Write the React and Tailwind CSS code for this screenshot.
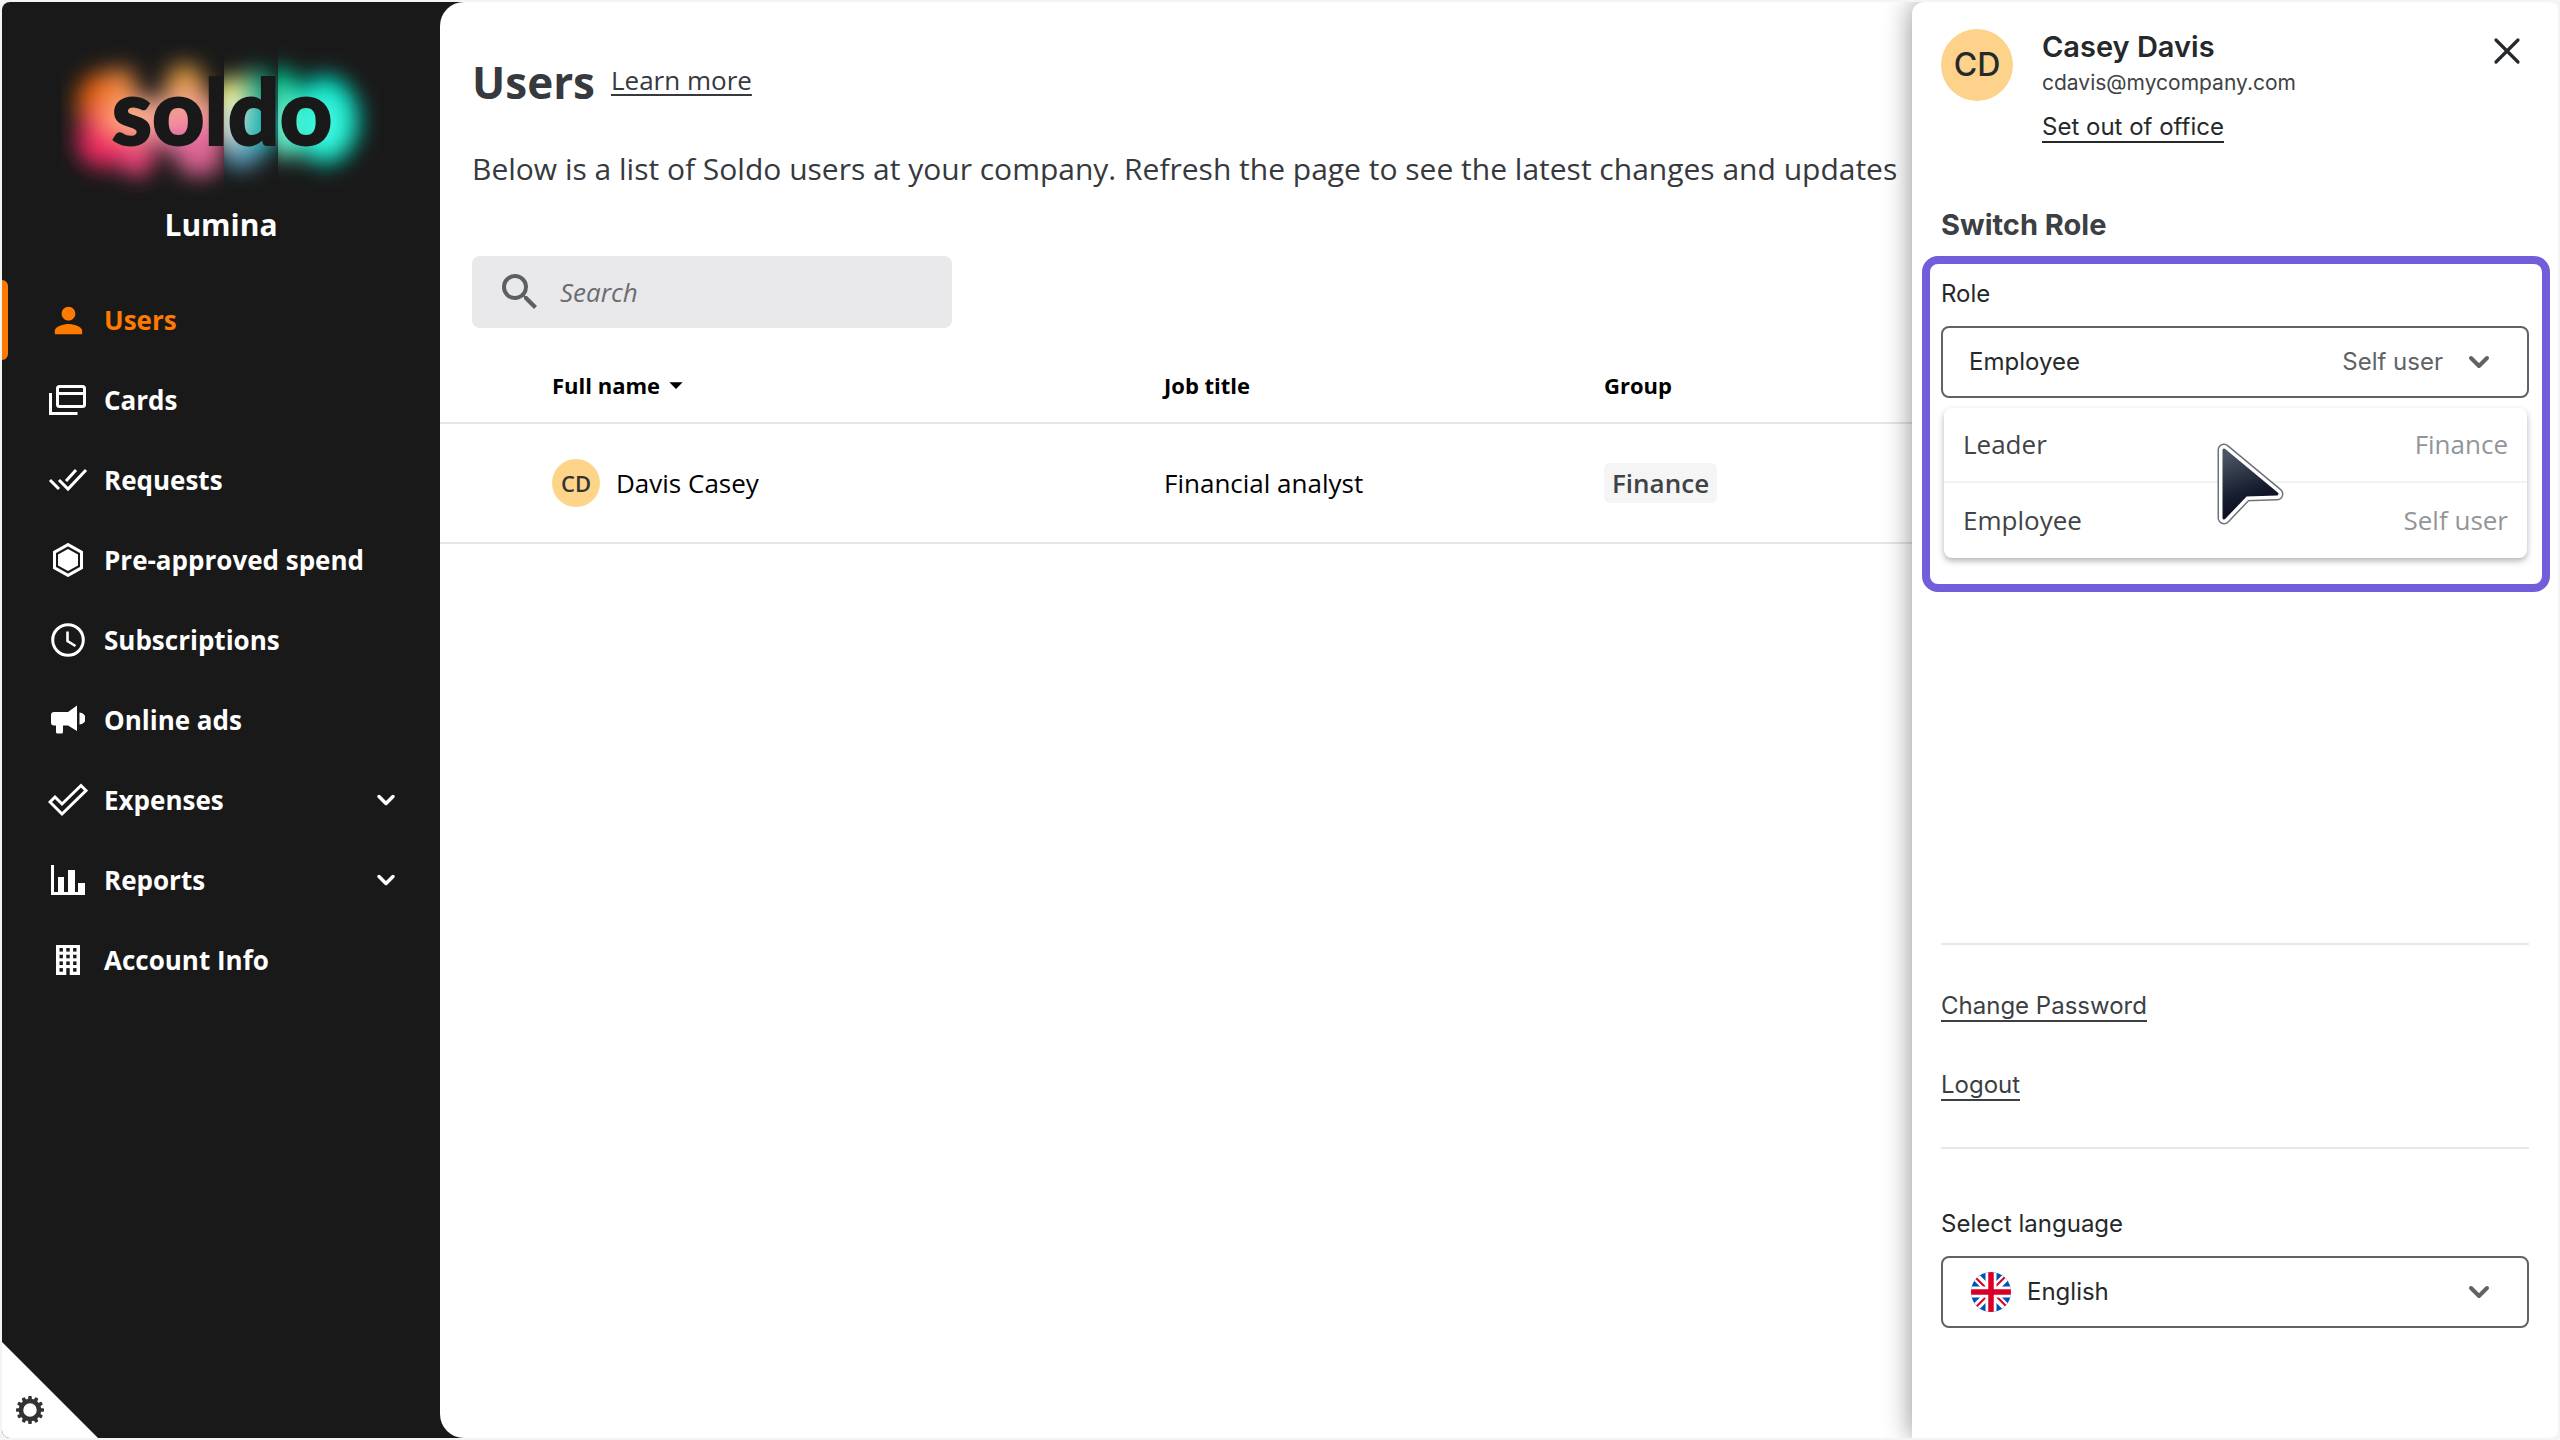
import { ChevronDown, X } from 'lucide-react'
import {
  MdPerson,
  MdSearch,
  MdArrowDropDown,
} from 'react-icons/md'

const SANS = "font-['Open_Sans','Noto_Sans',sans-serif]"
const INTER = 'font-[Inter,Roboto,sans-serif]'

const stroke = { fill: 'none', stroke: 'currentColor' }

function CardsIcon() {
  return (
    <svg viewBox="0 0 38 32" className="h-8 w-[38px]" {...stroke} strokeWidth="3">
      <rect x="8.5" y="2.5" width="27" height="20" rx="2" />
      <path d="M8 9.5h28M1.500 9v20.500h27" />
    </svg>
  )
}

function RequestsIcon() {
  return (
    <svg viewBox="0 0 40 24" className="h-6 w-10" {...stroke} strokeWidth="3">
      <path d="M2 12l9 9M11 12l9 9L38 2M18 13L28 2" />
    </svg>
  )
}

function SpendIcon() {
  return (
    <svg viewBox="0 0 30 34" className="h-[34px] w-[30px]">
      <path d="M15 1.600L28.500 9.200v15.600L15 32.400 1.500 24.800V9.200z" {...stroke} strokeWidth="3" />
      <path d="M15 6l10 5.500v11L15 28 5 22.500v-11z" fill="currentColor" />
    </svg>
  )
}

function ClockIcon() {
  return (
    <svg viewBox="0 0 34 34" className="h-[34px] w-[34px]" {...stroke} strokeWidth="3">
      <circle cx="17" cy="17" r="15.300" />
      <path d="M16.500 8.500v9.500l8 5" strokeWidth="2.600" />
    </svg>
  )
}

function MegaphoneIcon() {
  return (
    <svg viewBox="0 0 34 30" className="h-[30px] w-[34px]" fill="currentColor">
      <path d="M3 7h14l9-6.500v25.500L17 20.500h-5V27a1.500 1.500 0 0 1-1.500 1.500h-4A1.500 1.500 0 0 1 5 27v-6.500H3a3 3 0 0 1-3-3V10a3 3 0 0 1 3-3z" />
      <path d="M28.500 7.500a6 6 0 0 1 0 12z" />
    </svg>
  )
}

function ExpensesIcon() {
  return (
    <svg viewBox="0 0 40 34" className="h-[34px] w-10" {...stroke} strokeWidth="3">
      <path d="M2 19l5-5 7 7L33 2.500l5 5L14 31z" />
    </svg>
  )
}

function ReportsIcon() {
  return (
    <svg viewBox="0 0 34 30" className="h-[30px] w-[34px]" fill="currentColor">
      <path d="M0 0h3v27h4V12h6v15h4V5h7v22h3v-9h7v12H0z" />
    </svg>
  )
}

function BuildingIcon() {
  const cells = [0, 1, 2, 3].flatMap(r => [0, 1, 2].map(c => [c, r]))
  return (
    <svg viewBox="0 0 24 30" className="h-[30px] w-6">
      <rect width="24" height="30" fill="currentColor" />
      {cells.map(([c, r]) => (
        <rect key={`${c}-${r}`} x={3.500 + c * 6.800} y={3 + r * 6.700} width="3.400" height={r === 3 && c === 1 ? 7 : 3.600} fill="#191919" />
      ))}
    </svg>
  )
}

function UserIcon() {
  return <MdPerson className="h-[41px] w-[41px]" />
}

const NAV = [
  { label: 'Users', icon: UserIcon, active: true },
  { label: 'Cards', icon: CardsIcon },
  { label: 'Requests', icon: RequestsIcon },
  { label: 'Pre-approved spend', icon: SpendIcon },
  { label: 'Subscriptions', icon: ClockIcon },
  { label: 'Online ads', icon: MegaphoneIcon },
  { label: 'Expenses', icon: ExpensesIcon, expandable: true },
  { label: 'Reports', icon: ReportsIcon, expandable: true },
  { label: 'Account Info', icon: BuildingIcon },
]

const ROLES = [
  { name: 'Leader', scope: 'Finance' },
  { name: 'Employee', scope: 'Self user' },
]

// Blurred colour blobs cut off sharply at the right edge of the "l" and the "d"
function Logo() {
  return (
    <svg viewBox="0 0 320 160" className="h-[160px] w-[320px]" role="img" aria-label="soldo">
      <defs>
        <filter id="glow" x="-50%" y="-50%" width="200%" height="200%">
          <feGaussianBlur stdDeviation="11" />
        </filter>
        <clipPath id="left"><rect x="0" y="0" width="163" height="160" /></clipPath>
        <clipPath id="mid"><rect x="163" y="0" width="54" height="160" /></clipPath>
        <clipPath id="right"><rect x="217" y="0" width="103" height="160" /></clipPath>
      </defs>
      <g clipPath="url(#left)">
        <g filter="url(#glow)">
          <ellipse cx="42" cy="60" rx="26" ry="32" fill="#e8600f" />
          <ellipse cx="60" cy="46" rx="16" ry="22" fill="#f08a3c" />
          <ellipse cx="42" cy="96" rx="26" ry="28" fill="#ee2a62" />
          <ellipse cx="76" cy="112" rx="18" ry="20" fill="#f0467c" />
          <ellipse cx="58" cy="74" rx="18" ry="18" fill="#ff9a70" />
          <ellipse cx="84" cy="74" rx="24" ry="20" fill="#ffb090" />
          <ellipse cx="124" cy="44" rx="20" ry="24" fill="#e09a3c" />
          <ellipse cx="126" cy="70" rx="36" ry="22" fill="#f8a88c" />
          <ellipse cx="128" cy="90" rx="38" ry="18" fill="#f07ca8" />
          <ellipse cx="138" cy="112" rx="24" ry="20" fill="#dc6492" />
        </g>
      </g>
      <g clipPath="url(#mid)">
        <g filter="url(#glow)">
          <ellipse cx="170" cy="54" rx="20" ry="20" fill="#fcfc84" />
          <ellipse cx="196" cy="46" rx="18" ry="20" fill="#12b488" />
          <ellipse cx="172" cy="82" rx="20" ry="24" fill="#e6ecdf" />
          <ellipse cx="198" cy="82" rx="22" ry="26" fill="#1fc0bc" />
          <ellipse cx="180" cy="110" rx="20" ry="14" fill="#5a9fc0" />
        </g>
      </g>
      <g clipPath="url(#right)">
        <g filter="url(#glow)">
          <ellipse cx="220" cy="50" rx="18" ry="26" fill="#00cc98" />
          <ellipse cx="224" cy="84" rx="20" ry="30" fill="#6cf4cc" />
          <ellipse cx="264" cy="76" rx="34" ry="44" fill="#00e4c8" />
          <ellipse cx="262" cy="80" rx="20" ry="26" fill="#40f8e0" />
        </g>
      </g>
      <text x="161" y="101" textAnchor="middle" className="font-[Lato,sans-serif] text-[91px] font-black" fill="#191919" stroke="#191919" strokeWidth="2">soldo</text>
    </svg>
  )
}

function Gear() {
  return (
    <svg viewBox="-14 -14 28 28" className="h-7 w-7" fill="#333">
      <circle r="9" fill="none" stroke="#333" strokeWidth="4.500" />
      {Array.from({ length: 12 }, (_, i) => (
        <rect key={i} x="-1.800" y="-14" width="3.600" height="5" rx="1" transform={`rotate(${i * 30})`} />
      ))}
    </svg>
  )
}

function Flag() {
  return (
    <svg viewBox="0 0 40 40" className="h-10 w-10" aria-hidden="true">
      <clipPath id="round"><circle cx="20" cy="20" r="20" /></clipPath>
      <g clipPath="url(#round)">
        <rect width="40" height="40" fill="#0052b4" />
        <path d="M3 3l34 34M37 3L3 37" stroke="#fff" strokeWidth="8" />
        <path d="M4 5l15 15M36 35L21 20M35 4L20 19M4 36l16-16" stroke="#d80027" strokeWidth="2" />
        <path d="M20 0v40M0 20h40" stroke="#fff" strokeWidth="11" />
        <path d="M20 0v40M0 20h40" stroke="#d80027" strokeWidth="5.500" />
      </g>
    </svg>
  )
}

function Cursor() {
  return (
    <svg viewBox="0 0 68 84" className="h-[84px] w-[68px]" aria-hidden="true">
      <defs>
        <linearGradient id="arrow" x1="0.300" y1="0" x2="0.600" y2="1">
          <stop offset="0" stopColor="#4a5462" />
          <stop offset="0.600" stopColor="#161d2e" />
          <stop offset="1" stopColor="#060a1c" />
        </linearGradient>
      </defs>
      <path d="M7 7v68l22-23 31-1z" fill="#6f727b" stroke="#6f727b" strokeWidth="13" strokeLinejoin="round" />
      <path d="M7 7v68l22-23 31-1z" fill="#fff" stroke="#fff" strokeWidth="10" strokeLinejoin="round" />
      <path d="M7 7v68l22-23 31-1z" fill="url(#arrow)" stroke="url(#arrow)" strokeWidth="3" strokeLinejoin="round" />
    </svg>
  )
}

function NavItem({ item }) {
  const Icon = item.icon
  return (
    <li className="flex h-20 items-center">
      <span className={`h-full w-[6px] rounded-r-md ${item.active ? 'bg-[#ff7a00]' : ''}`} />
      <a href="#" className={`flex flex-1 items-center pr-10 text-[26px] font-bold ${item.active ? 'text-[#ff7a00]' : 'text-white'}`}>
        <span className="ml-9 mr-3 flex w-12 justify-center"><Icon /></span>
        {item.label}
        {item.expandable && <ChevronDown className="ml-auto h-7 w-7" strokeWidth={3} />}
      </a>
    </li>
  )
}

function Sidebar() {
  return (
    <aside className="relative flex w-[438px] shrink-0 flex-col bg-[#191919] text-white">
      <div className="flex flex-col items-center pt-[42px]">
        <Logo />
        <p className="text-[30px] leading-[42px] font-bold">Lumina</p>
      </div>
      <nav className="mt-[34px]">
        <ul>{NAV.map(item => <NavItem key={item.label} item={item} />)}</ul>
      </nav>
      <button
        aria-label="Settings"
        className="absolute bottom-0 left-0 flex h-24 w-24 items-end bg-white p-[14px] [clip-path:polygon(0_0,100%_100%,0_100%)]"
      >
        <Gear />
      </button>
    </aside>
  )
}

function UsersPage() {
  return (
    <main className="min-w-0 flex-1 overflow-hidden bg-[#191919] text-[#36393d]">
      <div className="h-full rounded-l-[24px] bg-white pt-12">
        <div className="flex items-center gap-4 pl-8">
          <h1 className="text-[44px] leading-[64px] font-bold">Users</h1>
          <a href="#" className="mb-1 text-[26px] leading-9 underline decoration-2 underline-offset-4">Learn more</a>
        </div>
        <p className="mt-[34px] pl-8 text-[30px] leading-[42px] whitespace-nowrap">
          Below is a list of Soldo users at your company. Refresh the page to see the latest changes and updates
        </p>
        <label className="mt-[66px] ml-8 flex h-[72px] w-[480px] items-center rounded-lg bg-[#e9e9eb] pl-6 text-[#5c5f63]">
          <MdSearch className="h-12 w-12" />
          <input type="search" aria-label="Search" placeholder="Search" className="ml-4 w-80 bg-transparent text-[26px] italic outline-none placeholder:text-[#6b6d70]" />
        </label>
        <table className="mt-[26px] w-full table-fixed text-left text-black">
          <thead>
            <tr className="h-[69px] border-b-2 border-[#e6e6e6] text-[22px]">
              <th className="w-[724px] pb-[6px] pl-28 font-bold">
                <button className="flex items-center">Full name <MdArrowDropDown className="h-8 w-8" /></button>
              </th>
              <th className="w-[440px] pb-[6px] font-bold">Job title</th>
              <th className="pb-[6px] font-bold">Group</th>
            </tr>
          </thead>
          <tbody>
            <tr className="h-[120px] border-b-2 border-[#e6e6e6] text-[26px]">
              <td className="pl-28">
                <div className="flex items-center gap-4">
                  <span className="flex h-12 w-12 items-center justify-center rounded-full bg-[#fdd488] text-[22px] font-semibold text-[#333]">CD</span>
                  Davis Casey
                </div>
              </td>
              <td>Financial analyst</td>
              <td><span className="rounded-md bg-[#f5f5f5] px-2 py-[2px] font-semibold text-[#404346]">Finance</span></td>
            </tr>
          </tbody>
        </table>
      </div>
    </main>
  )
}

function RoleSwitcher() {
  return (
    <section className="relative mt-[10px] mr-2 ml-[10px] h-[336px] rounded-2xl border-8 border-[#735ddb] pt-[14px] pr-[13px] pl-[11px]">
      <label htmlFor="role" className="block leading-8">Role</label>
      <div className="relative mt-4">
        <select id="role" className="h-[72px] w-full appearance-none rounded-lg border-2 border-[#606266] bg-white pl-[26px]">
          <option>Employee</option>
        </select>
        <div className="pointer-events-none absolute inset-y-0 right-[34px] flex items-center gap-5 text-[#606266]">
          Self user
          <ChevronDown className="h-8 w-8" strokeWidth={3} />
        </div>
      </div>
      <ul role="listbox" className={`mt-[10px] mr-[2px] ml-[3px] divide-y-2 divide-[#f2f2f2] rounded-lg bg-white text-[26px] shadow-[0_3px_6px_rgba(0,0,0,0.3)] ${SANS}`}>
        {ROLES.map(role => (
          <li key={role.name} role="option" aria-selected={role.name === 'Employee'} className="flex h-[75px] items-center justify-between px-[19px] text-[#404347]">
            {role.name}
            <span className="text-[#939598]">{role.scope}</span>
          </li>
        ))}
      </ul>
      <div className="pointer-events-none absolute top-[179px] left-[287px]"><Cursor /></div>
    </section>
  )
}

function ProfilePanel() {
  return (
    <aside className={`relative flex w-[646px] shrink-0 flex-col rounded-tl-xl bg-white text-[24px] text-[#26292b] shadow-[0_0_28px_rgba(0,0,0,0.45)] ${INTER}`}>
      <header className="flex items-start px-[29px] pt-[27px]">
        <span className="flex h-[72px] w-[72px] items-center justify-center rounded-full bg-[#fdd28a] text-[32px] font-medium">CD</span>
        <div className="ml-[29px] flex flex-col items-start">
          <h2 className="text-[29px] leading-9 font-semibold">Casey Davis</h2>
          <p className="text-[21px] leading-9 text-[#404346]">cdavis@mycompany.com</p>
          <a href="#" className="mt-3 border-b-2 border-[#26292b] leading-7">Set out of office</a>
        </div>
        <button aria-label="Close" className="ml-auto"><X className="h-11 w-11" strokeWidth={1.75} /></button>
      </header>
      <h3 className="mt-[61px] px-[29px] text-[29px] leading-[42px] font-bold text-[#3c3f43]">Switch Role</h3>
      <RoleSwitcher />
      <div className="mx-[29px] mt-[351px] flex flex-col items-start border-y-2 border-[#e8e8e8] pt-[47px] pb-[46px] text-[#3c3f43]">
        <a href="#" className="border-b-2 border-[#3c3f43] leading-7">Change Password</a>
        <a href="#" className="mt-[49px] border-b-2 border-[#3c3f43] leading-7">Logout</a>
      </div>
      <div className="mx-[29px] mt-[59px]">
        <label htmlFor="language" className="block leading-8">Select language</label>
        <div className="relative mt-4">
          <select id="language" className="h-[72px] w-full appearance-none rounded-lg border-2 border-[#606266] bg-white pl-[84px]">
            <option>English</option>
          </select>
          <div className="pointer-events-none absolute inset-y-0 right-[34px] left-[30px] flex items-center justify-between text-[#606266]">
            <Flag />
            <ChevronDown className="h-8 w-8" strokeWidth={3} />
          </div>
        </div>
      </div>
    </aside>
  )
}

export default function App() {
  return (
    <div className={`min-h-screen bg-[#f4f4f4] p-[2px] ${SANS}`}>
      <div className="flex min-h-[calc(100vh-4px)] overflow-hidden rounded-lg bg-white">
        <Sidebar />
        <UsersPage />
        <ProfilePanel />
      </div>
    </div>
  )
}
